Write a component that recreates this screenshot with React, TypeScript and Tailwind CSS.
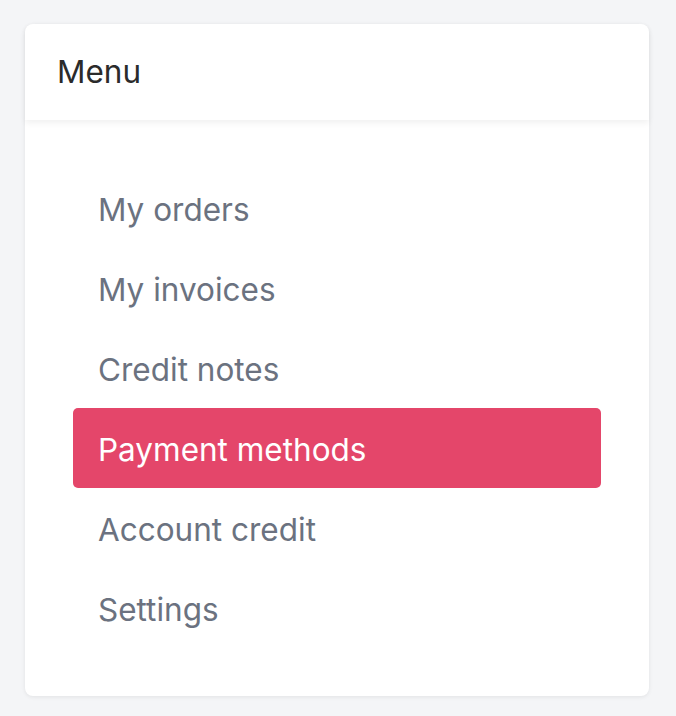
const items = ["My orders", "My invoices", "Credit notes", "Payment methods", "Account credit", "Settings"];

export default function App() {
  const active = "Payment methods";
  return (
    <div className="min-h-screen bg-[#f4f5f7] pt-6 pl-[25px] font-['Inter',sans-serif]">
      <div className="w-[624px] rounded-lg bg-white shadow-[0_1px_4px_rgba(0,0,0,0.08)]">
        <div className="relative flex h-24 items-center rounded-t-lg px-8 shadow-[0_3px_6px_rgba(0,0,0,0.06)]">
          <span className="text-[31.5px] text-[#2b2b2b]">Menu</span>
        </div>
        <nav className="flex flex-col px-12 py-12">
          {items.map((item) => (
            <a
              key={item}
              href="#"
              className={
                item === active
                  ? "flex h-20 items-center rounded-[5px] bg-[#e4466a] px-[25px] pt-[3px] text-[31.5px] text-white"
                  : "flex h-20 items-center px-[25px] pt-[3px] text-[31.5px] text-[#6b7280]"
              }
            >
              {item}
            </a>
          ))}
        </nav>
      </div>
    </div>
  );
}
